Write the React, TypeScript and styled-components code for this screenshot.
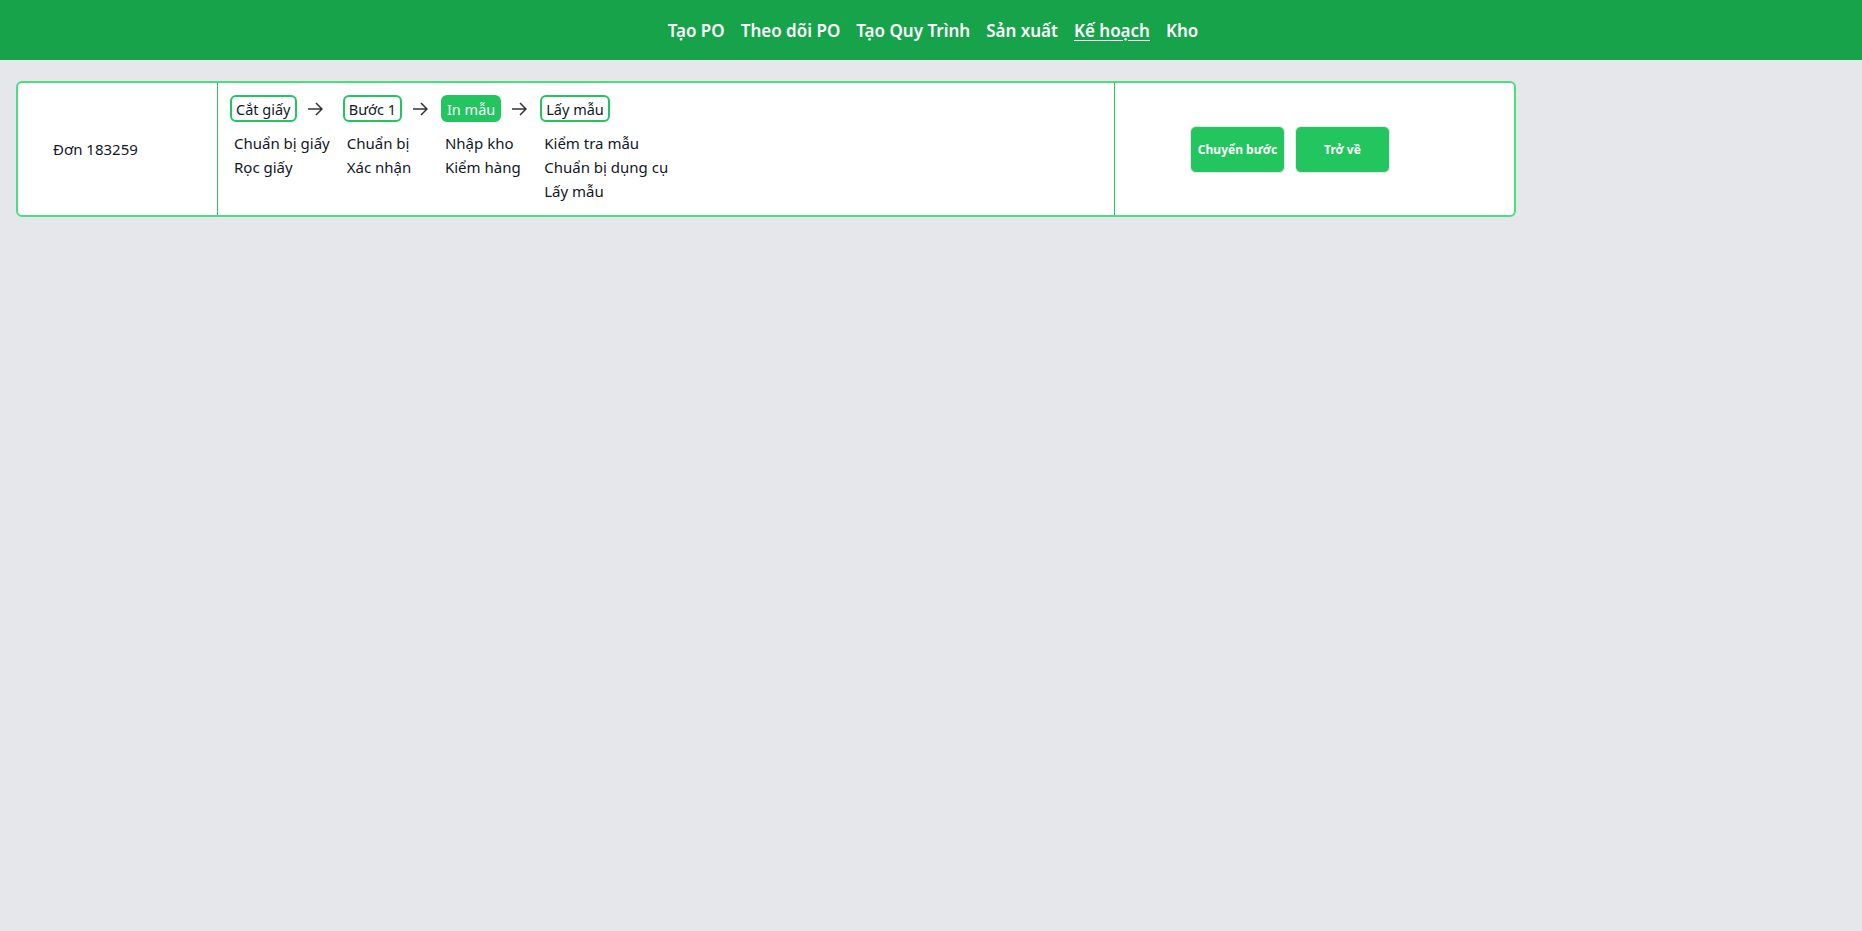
// React core
import * as React from 'react';

// Styled-components
import styled, { createGlobalStyle, css } from 'styled-components';

// Data
type Step = {
  name: string;
  tasks: string[];
  active?: boolean;
};

const steps: Step[] = [
  { name: 'Cắt giấy', tasks: ['Chuẩn bị giấy', 'Rọc giấy'] },
  { name: 'Bước 1', tasks: ['Chuẩn bị', 'Xác nhận'] },
  { name: 'In mẫu', tasks: ['Nhập kho', 'Kiểm hàng'], active: true },
  { name: 'Lấy mẫu', tasks: ['Kiểm tra mẫu', 'Chuẩn bị dụng cụ', 'Lấy mẫu'] },
];

const navItems = ['Tạo PO', 'Theo dõi PO', 'Tạo Quy Trình', 'Sản xuất', 'Kế hoạch', 'Kho'];

// Global
const GlobalStyle = createGlobalStyle`
  body {
    margin: 0;
    background: #e5e7eb;
    font-family: 'Noto Sans', 'Open Sans', sans-serif;
    color: #111827;
  }
`;

// StyledComponent
const Header = styled.header`
  display: flex;
  justify-content: center;
  align-items: center;

  height: 60px;
  padding-left: 4px;
  background: #16a34a;
`;

const Nav = styled.nav`
  display: flex;
  gap: 16px;
`;

const NavLink = styled.a<{ active?: boolean }>`
  color: white;
  font-size: 17px;
  font-weight: 600;
  text-decoration: none;
  cursor: pointer;
  ${(props) =>
    props.active &&
    css`
      text-decoration: underline;
      text-underline-offset: 3px;
    `}
`;

const Main = styled.main`
  padding: 21px 16px;
`;

const Card = styled.div`
  display: grid;
  grid-template-columns: 200px 897px 1fr;

  width: 1500px;
  box-sizing: border-box;
  border: 2px solid #4ade80;
  border-radius: 6px;
  background: white;
`;

const OrderCell = styled.div`
  display: flex;
  align-items: center;

  padding-left: 35px;
  border-right: 1px solid #22c55e;
  font-size: 15px;
`;

const StepsCell = styled.div`
  display: flex;
  gap: 13px;

  padding: 12px 12px 12px;
  border-right: 1px solid #22c55e;
`;

const StepItem = styled.div`
  display: flex;
  flex-direction: column;
`;

const StepHead = styled.div`
  display: flex;
  align-items: center;
  gap: 10px;
`;

const StepBox = styled.div<{ active?: boolean }>`
  display: flex;
  align-items: center;

  height: 27px;
  box-sizing: border-box;
  padding: 0 4px;
  border: 2px solid #22c55e;
  border-radius: 6px;
  font-size: 14.5px;
  white-space: nowrap;
  ${(props) =>
    props.active &&
    css`
      background: #22c55e;
      color: white;
    `}
`;

const TaskList = styled.div`
  display: flex;
  flex-direction: column;

  margin-top: 9px;
  padding-left: 4px;
  font-size: 15px;
  line-height: 24px;
  white-space: nowrap;
`;

const ActionCell = styled.div`
  display: flex;
  align-items: center;
  gap: 10px;

  padding-left: 75px;
`;

const ActionButton = styled.button`
  width: 95px;
  height: 47px;
  border: 1px solid #e5e7eb;
  border-radius: 6px;
  background: #22c55e;
  color: white;
  font-family: inherit;
  font-size: 12px;
  font-weight: 700;
  cursor: pointer;
`;

const Arrow = () => (
  <svg width="16" height="14" viewBox="0 0 16 14" fill="none" stroke="#333" strokeWidth="1.5">
    <path d="M1 7h14M9 1l6 6-6 6" />
  </svg>
);

// React functional component
export default function App() {
  return (
    <>
      <GlobalStyle />
      <Header>
        <Nav>
          {navItems.map((item) => (
            <NavLink key={item} active={item === 'Kế hoạch'}>
              {item}
            </NavLink>
          ))}
        </Nav>
      </Header>
      <Main>
        <Card>
          <OrderCell>Đơn 183259</OrderCell>
          <StepsCell>
            {steps.map((step, i) => (
              <StepItem key={step.name}>
                <StepHead>
                  <StepBox active={step.active}>{step.name}</StepBox>
                  {i < steps.length - 1 && <Arrow />}
                </StepHead>
                <TaskList>
                  {step.tasks.map((task) => (
                    <span key={task}>{task}</span>
                  ))}
                </TaskList>
              </StepItem>
            ))}
          </StepsCell>
          <ActionCell>
            <ActionButton>Chuyển bước</ActionButton>
            <ActionButton>Trở về</ActionButton>
          </ActionCell>
        </Card>
      </Main>
    </>
  );
}
